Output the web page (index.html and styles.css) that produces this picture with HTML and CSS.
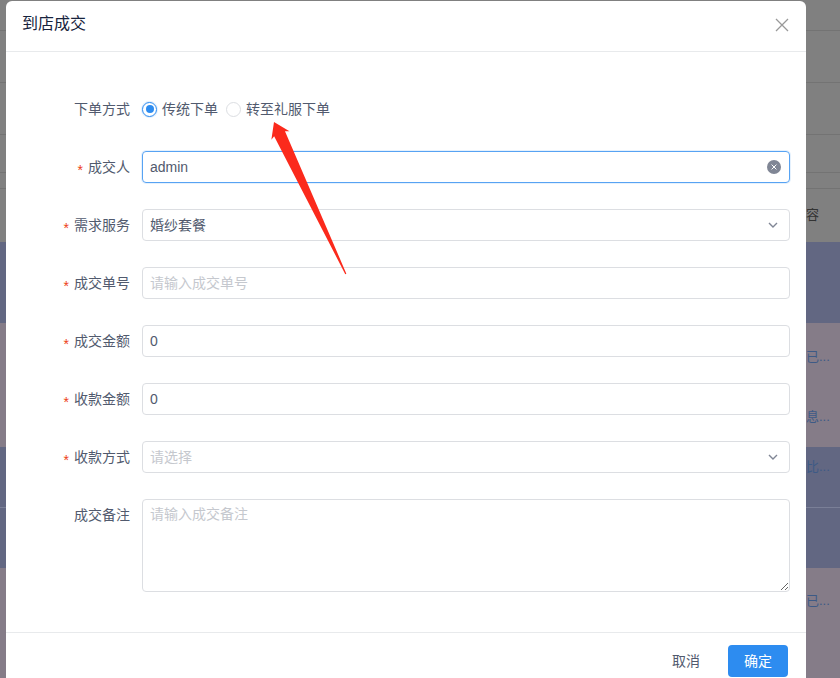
FILE: index.html
```html
<!DOCTYPE html>
<html>
    <head>
        <title>到店成交</title>
        <link rel="stylesheet" href="styles.css">
    </head>
    <body>
        <div class="page">
            <div class="row row-a"><span class="dot"></span></div>
            <div class="row row-b"></div>
            <div class="row row-c"></div>
            <div class="row row-d"></div>
            <div class="row row-e"></div>
            <div class="row row-f"><div class="cell dark">内容</div></div>
            <div class="row row-g"></div>
            <div class="row row-h">
                <div class="cell">客已...</div>
                <div class="cell second">信息...</div>
            </div>
            <div class="row row-i"><div class="cell">对比...</div></div>
            <div class="row row-j"></div>
            <div class="row row-k">
                <div class="cell">客已...</div>
                <div class="cell second">...</div>
            </div>
        </div>

        <div class="modal">
            <div class="modal-header">
                <div class="modal-title">到店成交</div>
                <svg class="close" width="14" height="14" viewBox="0 0 14 14">
                    <path d="M1 1 L13 13 M13 1 L1 13" stroke="#999" stroke-width="1.3" fill="none"/>
                </svg>
            </div>

            <div class="modal-body">
                <div class="item">
                    <label class="label">下单方式</label>
                    <div class="control radios">
                        <span class="radio checked"><span class="radio-inner"></span>传统下单</span>
                        <span class="radio"><span class="radio-inner"></span>转至礼服下单</span>
                    </div>
                </div>
                <div class="item">
                    <label class="label"><span class="req">*</span>成交人</label>
                    <div class="control">
                        <div class="input focused">
                            <span class="value">admin</span>
                            <svg class="clear" width="14" height="14" viewBox="0 0 14 14">
                                <circle cx="7" cy="7" r="7" fill="#808695"/>
                                <path d="M4.6 4.6 L9.4 9.4 M9.4 4.6 L4.6 9.4" stroke="#fff" stroke-width="1" fill="none"/>
                            </svg>
                        </div>
                    </div>
                </div>
                <div class="item">
                    <label class="label"><span class="req">*</span>需求服务</label>
                    <div class="control">
                        <div class="input">
                            <span class="value">婚纱套餐</span>
                            <svg class="arrow-down" width="10" height="6" viewBox="0 0 10 6">
                                <path d="M1 1 L5 5 L9 1" stroke="#808695" stroke-width="1.4" fill="none"/>
                            </svg>
                        </div>
                    </div>
                </div>
                <div class="item">
                    <label class="label"><span class="req">*</span>成交单号</label>
                    <div class="control">
                        <div class="input"><span class="placeholder">请输入成交单号</span></div>
                    </div>
                </div>
                <div class="item">
                    <label class="label"><span class="req">*</span>成交金额</label>
                    <div class="control">
                        <div class="input"><span class="value">0</span></div>
                    </div>
                </div>
                <div class="item">
                    <label class="label"><span class="req">*</span>收款金额</label>
                    <div class="control">
                        <div class="input"><span class="value">0</span></div>
                    </div>
                </div>
                <div class="item">
                    <label class="label"><span class="req">*</span>收款方式</label>
                    <div class="control">
                        <div class="input">
                            <span class="placeholder">请选择</span>
                            <svg class="arrow-down" width="10" height="6" viewBox="0 0 10 6">
                                <path d="M1 1 L5 5 L9 1" stroke="#808695" stroke-width="1.4" fill="none"/>
                            </svg>
                        </div>
                    </div>
                </div>
                <div class="item last">
                    <label class="label">成交备注</label>
                    <div class="control">
                        <textarea class="textarea" placeholder="请输入成交备注"></textarea>
                    </div>
                </div>
            </div>

            <div class="modal-footer">
                <div class="btn btn-text">取消</div>
                <div class="btn btn-primary">确定</div>
            </div>
        </div>

        <!-- red annotation arrow drawn over the dialog -->
        <svg class="annotation" width="840" height="678" viewBox="0 0 840 678">
            <g transform="translate(274 122) rotate(-25.3)">
                <polygon points="0,0 10,15 6,13 0.6,168 -0.6,168 -6,13 -10,15" fill="#fb2a1c"/>
            </g>
        </svg>
    </body>
</html>
```

FILE: styles.css
```css
html, body {
    margin: 0;
    padding: 0;
    width: 840px;
    height: 678px;
    overflow: hidden;
}
body {
    font-family: "Liberation Sans", "Noto Sans CJK SC", sans-serif;
    font-size: 14px;
    color: #515a6e;
    position: relative;
}

/* page behind the mask */
.page {
    width: 840px;
}
.row {
    background: #808080;
    box-sizing: border-box;
    position: relative;
}
.row-a { height: 31px; border-bottom: 1px solid #737373; }
.row-b { height: 52px; border-bottom: 1px solid #737373; }
.row-c { height: 52px; border-bottom: 1px solid #737373; }
.row-d { height: 38px; border-bottom: 1px solid #737373; }
.row-e { height: 16px; border-bottom: 1px solid #737373; }
.row-f { height: 53px; padding-top: 18px; }
.row-g { height: 81px; background: #626782; }
.row-h { height: 124px; background: #857c88; padding-top: 26px; }
.row-i { height: 61px; background: #626782; border-bottom: 1px solid #7a7f97; padding-top: 12px; }
.row-j { height: 60px; background: #626782; }
.row-k { height: 110px; background: #857c88; padding-top: 25px; }
.cell {
    margin-left: 793px;
    font-size: 13px;
    line-height: 16px;
    height: 16px;
    color: #3d5a86;
    white-space: nowrap;
}
.cell.dark {
    color: #333;
}
.cell.second {
    margin-top: 44px;
}
.dot {
    display: block;
    position: absolute;
    left: 0;
    top: 35px;
    width: 2px;
    height: 5px;
    background: #3a7bc8;
}

/* modal */
.modal {
    position: absolute;
    top: 1px;
    left: 6px;
    width: 800px;
    background: #fff;
    border-radius: 6px;
}
.modal-header {
    display: flex;
    align-items: center;
    padding: 12px 16px 16px;
    border-bottom: 1px solid #e8eaec;
    line-height: 22px;
}
.modal-title {
    flex: 1;
    font-size: 16px;
    color: #17233d;
}
.close {
    margin-right: 1px;
    margin-top: 2px;
}
.modal-body {
    padding: 41px 16px 40px;
}
.item {
    display: flex;
    margin-bottom: 26px;
}
.item.last {
    margin-bottom: 0;
}
.label {
    display: block;
    width: 120px;
    height: 32px;
    box-sizing: border-box;
    padding: 9px 12px 0 0;
    text-align: right;
    line-height: 14px;
    font-size: 14px;
    color: #515a6e;
    white-space: nowrap;
}
.req {
    color: #ed4014;
    margin-right: 5px;
    font-size: 14px;
    vertical-align: -3px;
    line-height: 0;
}
.control {
    flex: 1;
}
.radios {
    display: flex;
    align-items: center;
    height: 32px;
}
.radio {
    display: flex;
    align-items: center;
    margin-right: 8px;
    line-height: 16px;
}
.radio-inner {
    width: 15px;
    height: 15px;
    box-sizing: border-box;
    border: 1px solid #dcdee2;
    border-radius: 50%;
    margin-right: 5px;
    position: relative;
    background: #fff;
}
.radio.checked .radio-inner {
    border-color: #2d8cf0;
    box-shadow: 0 0 0 1px rgba(45, 140, 240, .15);
}
.radio.checked .radio-inner::after {
    content: "";
    position: absolute;
    left: 2.5px;
    top: 2.5px;
    width: 8px;
    height: 8px;
    border-radius: 50%;
    background: #2d8cf0;
}
.input {
    display: flex;
    align-items: center;
    height: 32px;
    box-sizing: border-box;
    border: 1px solid #dcdee2;
    border-radius: 4px;
    padding: 4px 7px;
    line-height: 22px;
}
.input.focused {
    border-color: #57a3f3;
    box-shadow: 0 0 0 1px rgba(45, 140, 240, .12);
}
.value {
    flex: 1;
    color: #515a6e;
}
.placeholder {
    flex: 1;
    color: #c5c8ce;
}
.clear {
    margin-right: 1px;
}
.arrow-down {
    margin-right: 4px;
}
.textarea {
    display: block;
    width: 100%;
    height: 93px;
    box-sizing: border-box;
    border: 1px solid #dcdee2;
    border-radius: 4px;
    padding: 4px 7px;
    font-family: "Liberation Sans", "Noto Sans CJK SC", sans-serif;
    font-size: 14px;
    line-height: 20px;
    color: #515a6e;
    resize: vertical;
    outline: none;
    margin: 0;
}
.textarea::placeholder {
    color: #c5c8ce;
}
.modal-footer {
    display: flex;
    justify-content: flex-end;
    border-top: 1px solid #e8eaec;
    padding: 12px 18px;
}
.btn {
    height: 32px;
    line-height: 32px;
    padding: 0 16px;
    border-radius: 4px;
    font-size: 14px;
    cursor: pointer;
    user-select: none;
}
.btn-text {
    color: #515a6e;
    margin-right: 12px;
}
.btn-primary {
    background: #2d8cf0;
    color: #fff;
}

.annotation {
    position: absolute;
    top: 0;
    left: 0;
    pointer-events: none;
}
```
